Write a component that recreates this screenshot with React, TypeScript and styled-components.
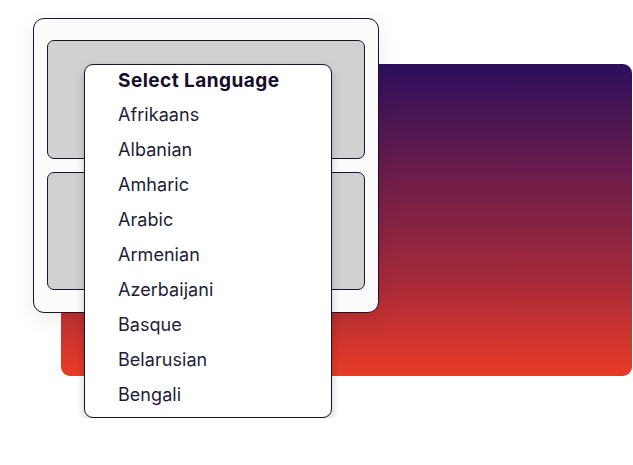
import * as React from 'react';
import styled, { createGlobalStyle } from 'styled-components';

const GlobalStyle = createGlobalStyle`
  html, body {
    margin: 0;
    padding: 0;
    background: #ffffff;
  }
`;

const languages = [
  'Afrikaans',
  'Albanian',
  'Amharic',
  'Arabic',
  'Armenian',
  'Azerbaijani',
  'Basque',
  'Belarusian',
  'Bengali'
];

const Stage = styled.div`
  display: grid;
  grid-template-columns: 28px 23px 248px 47px 253px;
  grid-template-rows: 46px 249px 63px 42px;
  padding: 18px 0 0 33px;
  font-family: Inter, "Liberation Sans", sans-serif;
`;

const GradientCard = styled.div`
  grid-column: 2 / 6;
  grid-row: 2 / 4;
  border-radius: 9px;
  background: linear-gradient(180deg, #2c0f5d 0%, #6b1d4a 35%, #a3293a 68%, #e83b26 100%);
  z-index: 0;
`;

const WindowCard = styled.div`
  grid-column: 1 / 5;
  grid-row: 1 / 3;
  z-index: 1;
  display: flex;
  flex-direction: column;
  gap: 13px;
  padding: 21px 13px 22px;
  background: #fbfbfb;
  border: 1px solid #1b1130;
  border-radius: 11px;
  box-shadow: 0 6px 22px rgba(0, 0, 0, 0.08);
`;

const Panel = styled.div`
  flex: 1;
  background: #d1d1d1;
  border: 1px solid #1b1130;
  border-radius: 7px;
`;

const Dropdown = styled.ul`
  grid-column: 3 / 4;
  grid-row: 2 / 5;
  z-index: 2;
  list-style: none;
  margin: 0;
  padding: 0 0 0 33px;
  background: #ffffff;
  border: 1px solid #1b1130;
  border-radius: 9px;
  box-shadow: 0 4px 9px rgba(0, 0, 0, 0.22);
`;

const Option = styled.li<{ $header?: boolean }>`
  height: ${(props) => (props.$header ? '32px' : '35px')};
  line-height: ${(props) => (props.$header ? '31px' : '35px')};
  font-size: ${(props) => (props.$header ? '19px' : '18px')};
  font-weight: ${(props) => (props.$header ? 700 : 400)};
  color: ${(props) => (props.$header ? '#140e2b' : '#221d36')};
  letter-spacing: ${(props) => (props.$header ? '0.45px' : '0.05px')};
  white-space: nowrap;
`;

export default function App() {
  return (
    <>
      <GlobalStyle />
      <Stage>
        <GradientCard />
        <WindowCard>
          <Panel />
          <Panel />
        </WindowCard>
        <Dropdown>
          <Option $header>Select Language</Option>
          {languages.map((lang) => (
            <Option key={lang}>{lang}</Option>
          ))}
        </Dropdown>
      </Stage>
    </>
  );
}
